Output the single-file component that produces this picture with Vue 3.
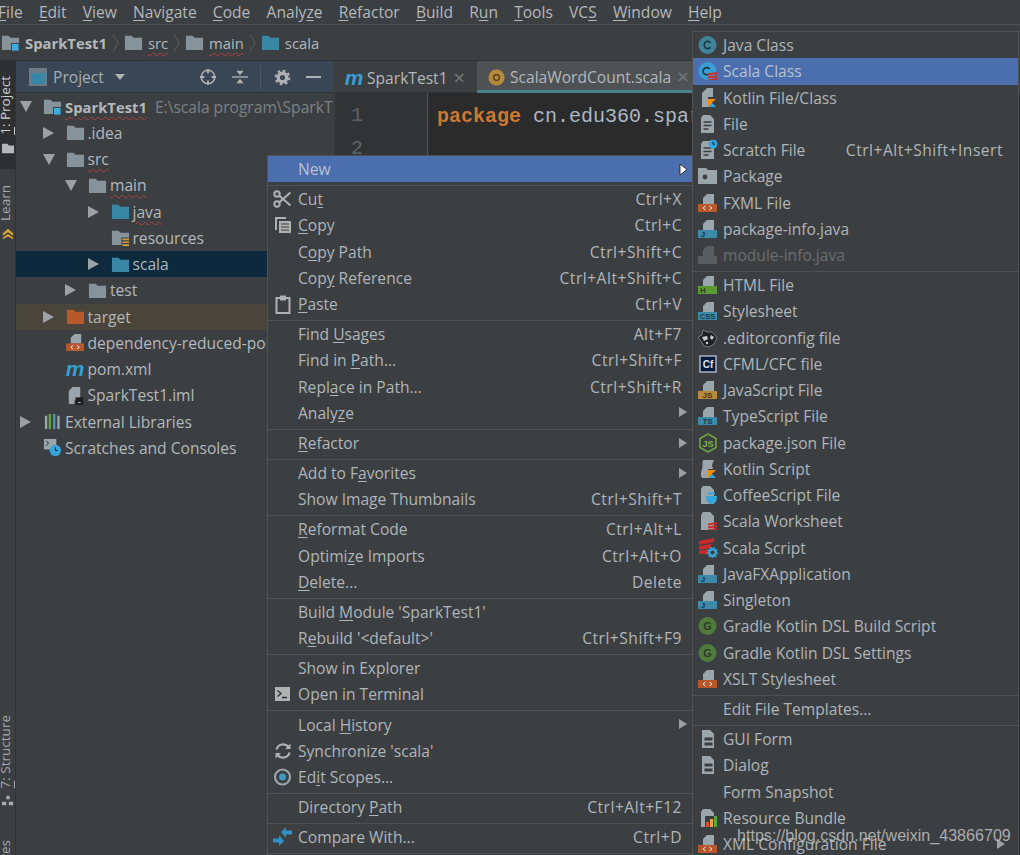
<script setup>
const G = '#9aa5ac'
const D = '#3c3f41'
const doc = `<path d="M9 1h7v10H5V5z" fill="${G}"/>`
const tag = (c, t, tc = '#2f3a3f', fs = 8) =>
  `${doc}<rect x="0" y="11" width="19" height="8" fill="${c}"/><text x="${t.length > 1 ? 9.5 : 5}" y="18" font-size="${fs}" text-anchor="middle" font-family="Liberation Sans,sans-serif" font-weight="700" fill="${tc}">${t}</text>`
const xml = `${doc}<rect x="0" y="11" width="19" height="8" fill="#b8582a"/><path d="M7.5 13l-2.5 2 2.5 2M11.5 13l2.5 2-2.5 2" fill="none" stroke="#eee" stroke-width="1"/>`
const page = `<path d="M5 1h7l4 4v14H3V4z" fill="${G}"/>`
const lines = `<path d="M5.5 8h8M5.5 11.5h8M5.5 15h5" stroke="${D}" stroke-width="1.4"/>`
const stripes = `<path d="M10 12.5l9-1.5v2l-9 1.5zM10 15.5l9-1.5v2l-9 1.5zM10 18.5l9-1.5v2h-9z" fill="#d02b2b"/>`
const kot = `<path d="M10 11h8l-4.5 4.2L18 19h-8z" fill="#f88909"/><path d="M10 19l4-4 4 4z" fill="#27a6e5"/>`
const clock = (x, y, r) => `<circle cx="${x}" cy="${y}" r="${r}" fill="#35a5dc"/><path d="M${x} ${y - r * 0.55}v${r * 0.6}h${r * 0.45}" stroke="#123" fill="none" stroke-width="1"/>`
const folder = (c) => `<path d="M1 3h7l2 2h9v13H1z" fill="${c}"/>`
const gradle = `<circle cx="9.5" cy="10" r="9" fill="#4f7c3c"/><text x="9.5" y="14" font-size="11" font-weight="700" text-anchor="middle" font-family="Liberation Sans,sans-serif" fill="#2d3a2a">G</text>`

const icons = {
  java: `<circle cx="9.5" cy="10" r="9" fill="#40849b"/><path d="M12.5 7.7a3.6 3.6 0 1 0 0 4.6" fill="none" stroke="#1f3640" stroke-width="1.6"/>`,
  scala: `<circle cx="9.5" cy="10" r="9" fill="#389fd6"/><path d="M11.5 8a3.6 3.6 0 1 0 0 4.4" fill="none" stroke="#1f3640" stroke-width="1.6"/>${stripes}`,
  kotlin: `<path d="M9 0h6v9h-5v10H4V5z" fill="${G}"/>${kot}`,
  file: page + lines,
  scratch: page + lines + clock(15, 4, 4.5),
  pack: `<path d="M0 2h8l2 2h9v14H0z" fill="#9aa5ac"/><circle cx="7" cy="11" r="2.4" fill="${D}"/>`,
  xml,
  pj: tag('#3d8aa8', 'J', '#1f3640', 8),
  mod: `<g opacity=".3">${doc}<rect y="11" width="19" height="8" fill="${G}"/></g>`,
  html: tag('#5a9a35', 'H', '#26401a', 8),
  css: tag('#3d8aa8', 'CSS', '#1b3a47', 7.5),
  ec: `<path d="M0 9l4-2 1-5 4 2 5 0 3 3 2 3-3 6-5 3-5-1-3-5z" fill="#1f2021" stroke="#8a8d8f" stroke-width=".8"/><path d="M4 9l5-1 1 3-4 2zM13 7l3 2-2 3-2-2z" fill="#c9cbcd"/><circle cx="9" cy="15" r="1.2" fill="#c9cbcd"/>`,
  cf: `<rect x="2" y="2" width="16" height="16" fill="#0a1a3c" stroke="#b4bccc" stroke-width="1.4"/><text x="10" y="14" font-size="10" font-weight="700" text-anchor="middle" font-family="Liberation Sans,sans-serif" fill="#dfe6f2">Cf</text>`,
  js: tag('#b98a3a', 'JS', '#4a3513', 8),
  ts: tag('#3d8aa8', 'TS', '#1b3a47', 8),
  npm: `<path d="M10 1l8 4.5v9L10 19l-8-4.5v-9z" fill="none" stroke="#6da43f" stroke-width="1.6"/><text x="10" y="13.5" font-size="9" font-weight="700" text-anchor="middle" font-family="Liberation Sans,sans-serif" fill="#7fb548">JS</text>`,
  ks: `<path d="M5 1h11l-2 5 1 4h-5v9H4c-2-3-1-6 0-9 1-3 0-6 1-9z" fill="${G}"/>${kot}`,
  coffee: `${page}<path d="M8 11h11c0 4-1 8-5.5 8S8 15 8 11z" fill="#35a5dc"/><path d="M10 8.500h7" stroke="#35a5dc" stroke-width="2"/>`,
  ws: page + stripes,
  ss: `<path d="M1 3l15-3v4L1 7zM1 8l12-2v4L1 12zM1 13l9-1.500V16H1z" fill="#c92a2a"/><circle cx="14.500" cy="14.500" r="3.300" fill="none" stroke="#35a5dc" stroke-width="2.400"/><circle cx="14.500" cy="14.500" r="5" fill="none" stroke="#35a5dc" stroke-width="1.200" stroke-dasharray="1.700 1.700"/>`,
  gradle,
  gui: `<path d="M5 1h8l4 4v14H5z" transform="translate(-1 0)" fill="${G}"/><path d="M6.500 8.500h8v3h-8zM6.500 13.500h8v3h-8z" fill="${D}"/>`,
  bundle: `${page}<rect x="7" y="8" width="13" height="12" fill="${D}"/><rect x="8" y="14" width="3" height="5" fill="#d9512c"/><rect x="12" y="11" width="3" height="8" fill="#e8a33d"/><rect x="16" y="8" width="3" height="11" fill="#59a83c"/>`,
  cut: `<g fill="none" stroke="#afb1b3" stroke-width="2"><circle cx="4" cy="5" r="2.700"/><circle cx="4" cy="15" r="2.700"/><path d="M6 6.500L17.500 16.500M6 13.500L17.500 3.500"/></g>`,
  copy: `<path d="M2 2h11v2H4v11H2z" fill="#afb1b3"/><path d="M6 6h12v12H6z" fill="#afb1b3"/><path d="M8 9h8M8 12h8M8 15h8" stroke="${D}" stroke-width="1.200"/>`,
  paste: `<path d="M3.500 4h13v15h-13z" fill="none" stroke="#afb1b3" stroke-width="2"/><rect x="7" y="1.500" width="6" height="5" fill="#afb1b3"/>`,
  term: `<rect x="2" y="3" width="15" height="14" fill="#afb1b3"/><path d="M4.500 6.500L8 9.500l-3.500 3M9 13.500h5" fill="none" stroke="#2b2d2e" stroke-width="1.300"/>`,
  sync: `<g fill="none" stroke="#afb1b3" stroke-width="2.200"><path d="M3.500 8.500a6.800 6.800 0 0 1 12-2.500"/><path d="M16.500 11.500a6.800 6.800 0 0 1-12 2.500"/></g><path d="M17.500 2.500v5.500h-5.500zM2.500 17.500V12h5.500z" fill="#afb1b3"/>`,
  scopes: `<circle cx="9.500" cy="10" r="7.500" fill="none" stroke="#9aa5ac" stroke-width="2.200"/><circle cx="9.500" cy="10" r="3.500" fill="#3f9ac0"/>`,
  compare: `<path d="M0 12h6V8.500l5 6-5 5V16H0zM19 8h-6v3.500l-5-6 5-5V4h6z" fill="#2f8fc9" transform="translate(0 -.5)"/>`,
  folder: folder('#87939a'),
  blue: folder('#3a87a5'),
  orange: folder('#b8592a'),
  module: `${folder('#87939a')}<rect x="11" y="11" width="8" height="8" fill="#3dade0" stroke="${D}" stroke-width="1"/>`,
  res: `${folder('#87939a')}<rect x="11" y="10" width="9" height="10" fill="${D}"/><path d="M12 12h7M12 15h7M12 18h7" stroke="#d1a23f" stroke-width="1.700"/>`,
  maven: `<text x="9.500" y="16.500" font-size="22" font-style="italic" font-weight="700" text-anchor="middle" font-family="Liberation Sans,sans-serif" fill="#389fd6">m</text>`,
  iml: `<path d="M7 1h8v14H3V5z" fill="${G}"/><path d="M3 6h6v13H3z" fill="${G}"/><rect x="10" y="12" width="8" height="8" fill="#1c1c1c"/><path d="M12.500 17.500h3" stroke="#ccc"/>`,
  libs: `<path d="M2 4h2.500v14H2zM15 4h2.500v14H15z" fill="${G}"/><path d="M6 2h2.500v16H6z" fill="#5fa53c"/><path d="M10.500 2H13v16h-2.500z" fill="#3f9ac0"/>`,
  scr: `<rect x="1" y="1" width="13" height="11" fill="${G}"/><path d="M3 3l3 2.500L3 8" stroke="#333" fill="none"/>${clock(13, 13, 6)}`
}

const withU = (s) => {
  const i = s.indexOf('_')
  return i < 0 ? [s, '', ''] : [s.slice(0, i), s[i + 1], s.slice(i + 2)]
}
const mk = (raw) =>
  raw.map((r) => (r === 0 ? { sep: true } : { p: withU(r[0]), icon: r[1] || '', sc: r[2] || '', more: r[3] || false, sel: r[4] || false, dim: r[5] || false }))

const menu = ['_File', '_Edit', '_View', '_Navigate', '_Code', 'Analy_ze', '_Refactor', '_Build', 'R_un', '_Tools', 'VC_S', '_Window', '_Help'].map(withU)

const popups = [
  {
    cls: 'ctx',
    items: mk([
      ['New', '', '', 'cursor', true], 0,
      ['Cu_t', 'cut', 'Ctrl+X'], ['_Copy', 'copy', 'Ctrl+C'], ['C_opy Path', '', 'Ctrl+Shift+C'], ['Cop_y Reference', '', 'Ctrl+Alt+Shift+C'], ['_Paste', 'paste', 'Ctrl+V'], 0,
      ['Find _Usages', '', 'Alt+F7'], ['Find in _Path...', '', 'Ctrl+Shift+F'], ['Repl_ace in Path...', '', 'Ctrl+Shift+R'], ['Analy_ze', '', '', true], 0,
      ['_Refactor', '', '', true], 0,
      ['Add to F_avorites', '', '', true], ['Show Image Thumbnails', '', 'Ctrl+Shift+T'], 0,
      ['_Reformat Code', '', 'Ctrl+Alt+L'], ['Optimi_ze Imports', '', 'Ctrl+Alt+O'], ['_Delete...', '', 'Delete'], 0,
      ['Build _Module \'SparkTest1\''], ['R_ebuild \'<default>\'', '', 'Ctrl+Shift+F9'], 0,
      ['Show in Explorer'], ['Open in Terminal', 'term'], 0,
      ['Local _History', '', '', true], ['Synchronize \'scala\'', 'sync'], ['Ed_it Scopes...', 'scopes'], 0,
      ['Directory _Path', '', 'Ctrl+Alt+F12'], 0,
      ['Compare With...', 'compare', 'Ctrl+D'], 0
    ])
  },
  {
    cls: 'sub',
    items: mk([
      ['Java Class', 'java'], ['Scala Class', 'scala', '', false, true], ['Kotlin File/Class', 'kotlin'], ['File', 'file'], ['Scratch File', 'scratch', 'Ctrl+Alt+Shift+Insert'], ['Package', 'pack'], ['FXML File', 'xml'], ['package-info.java', 'pj'], ['module-info.java', 'mod', '', false, false, true], 0,
      ['HTML File', 'html'], ['Stylesheet', 'css'], ['.editorconfig file', 'ec'], ['CFML/CFC file', 'cf'], ['JavaScript File', 'js'], ['TypeScript File', 'ts'], ['package.json File', 'npm'], ['Kotlin Script', 'ks'], ['CoffeeScript File', 'coffee'], ['Scala Worksheet', 'ws'], ['Scala Script', 'ss'], ['JavaFXApplication', 'pj'], ['Singleton', 'pj'], ['Gradle Kotlin DSL Build Script', 'gradle'], ['Gradle Kotlin DSL Settings', 'gradle'], ['XSLT Stylesheet', 'xml'], 0,
      ['Edit File Templates...'], 0,
      ['GUI Form', 'gui'], ['Dialog', 'gui'], ['Form Snapshot'], ['Resource Bundle', 'bundle'], ['XML Configuration File', 'xml', '', true]
    ])
  }
]

const tree = [
  { lv: 0, arrow: 'down', icon: 'module', name: 'SparkTest1', bold: true, wavy: true, hint: 'E:\\scala program\\SparkTest1' },
  { lv: 1, arrow: 'right', icon: 'folder', name: '.idea' },
  { lv: 1, arrow: 'down', icon: 'folder', name: 'src', wavy: true },
  { lv: 2, arrow: 'down', icon: 'folder', name: 'main', wavy: true },
  { lv: 3, arrow: 'right', icon: 'blue', name: 'java', wavy: true },
  { lv: 3, icon: 'res', name: 'resources' },
  { lv: 3, arrow: 'right', icon: 'blue', name: 'scala', cls: 'selected' },
  { lv: 2, arrow: 'right', icon: 'folder', name: 'test' },
  { lv: 1, arrow: 'right', icon: 'orange', name: 'target', cls: 'excluded' },
  { lv: 1, icon: 'xml', name: 'dependency-reduced-pom.xml' },
  { lv: 1, icon: 'maven', name: 'pom.xml' },
  { lv: 1, icon: 'iml', name: 'SparkTest1.iml' },
  { lv: 0, arrow: 'right', icon: 'libs', name: 'External Libraries' },
  { lv: 0, icon: 'scr', name: 'Scratches and Consoles' }
]
const crumbs = [
  { icon: 'module', name: 'SparkTest1', cls: 'strong' },
  { icon: 'folder', name: 'src', cls: 'wavy' },
  { icon: 'folder', name: 'main', cls: 'wavy' },
  { icon: 'blue', name: 'scala', cls: '' }
]
</script>

<template>
  <div class="app">
    <div class="menubar">
      <span v-for="m in menu" :key="m[1] + m[2]">{{ m[0] }}<u>{{ m[1] }}</u>{{ m[2] }}</span>
    </div>
    <div class="crumbs">
      <template v-for="(c, i) in crumbs" :key="c.name">
        <svg class="cr-ic" viewBox="0 0 20 20" v-html="icons[c.icon]"></svg>
        <span class="cr-name" :class="c.cls">{{ c.name }}</span>
        <svg v-if="i < 3" class="chev" viewBox="0 0 8 22"><path d="M1 1l6 10-6 10" fill="none" stroke="#5e6163" /></svg>
      </template>
    </div>
    <div class="work">
      <aside class="strip">
        <div class="stab active">
          <span class="vtxt"><u>1</u>: Project</span>
          <svg class="si" viewBox="0 0 14 12"><path d="M0 1h6l2 2h6v9H0z" fill="#b5b8ba" /></svg>
        </div>
        <div class="stab learn">
          <span class="vtxt">Learn</span>
          <svg class="si" viewBox="0 0 14 14"><path d="M7 1l6 5v3L7 5 1 9V6z" fill="#d9a03a" /><path d="M7 7l6 4v2L7 10l-6 3v-2z" fill="#d9a03a" /></svg>
        </div>
        <div class="grow"></div>
        <div class="stab structure">
          <span class="vtxt"><u>7</u>: Structure</span>
          <svg class="si" viewBox="0 0 14 12"><path d="M5 0h4v4H5zM0 7h5v4H0zM8 7h5v4H8z" fill="#a9abad" /></svg>
        </div>
        <div class="stab fav"><span class="vtxt">2: Favorites</span></div>
      </aside>
      <section class="project">
        <div class="ptools">
          <svg class="pw" viewBox="0 0 18 18"><rect x="1" y="1" width="16" height="16" fill="#3a87a5" stroke="#6e7b87" stroke-width="2" /><rect x="2" y="2" width="14" height="3" fill="#6e7b87" /></svg>
          <span class="ptitle">Project</span>
          <span class="caret"></span>
          <div class="grow"></div>
          <svg class="tb" viewBox="0 0 20 20"><circle cx="10" cy="10" r="7.500" fill="none" stroke="#afb1b3" stroke-width="1.700" /><path d="M10 1v5M10 14v5M1 10h5M14 10h5" stroke="#afb1b3" stroke-width="2" /></svg>
          <svg class="tb t2" viewBox="0 0 20 20"><path d="M1 10h18" stroke="#afb1b3" stroke-width="1.500" /><path d="M6 3h8l-4 5zM6 17h8l-4-5z" fill="#afb1b3" /></svg>
          <i class="vsep"></i>
          <svg class="tb t3" viewBox="0 0 20 20"><circle cx="10" cy="10" r="5" fill="none" stroke="#afb1b3" stroke-width="4" /><circle cx="10" cy="10" r="8" fill="none" stroke="#afb1b3" stroke-width="2.500" stroke-dasharray="3.200 3.100" /></svg>
          <i class="minus"></i>
        </div>
        <div class="tree">
          <div v-for="t in tree" :key="t.name" class="trow" :class="t.cls" :style="{ paddingLeft: 4 + t.lv * 22.5 + 'px' }">
            <span class="arr" :class="t.arrow"></span>
            <svg class="tic" viewBox="0 0 20 20" v-html="icons[t.icon]"></svg>
            <span class="tname" :class="{ strong: t.bold, wavy: t.wavy }">{{ t.name }}</span>
            <span v-if="t.hint" class="hint">{{ t.hint }}</span>
          </div>
        </div>
      </section>
      <section class="editor">
        <div class="tabs">
          <div class="tab one">
            <svg class="tic" viewBox="0 0 20 20" v-html="icons.maven"></svg>
            <span>SparkTest1</span><span class="x">×</span>
          </div>
          <div class="tab two">
            <svg class="tic" viewBox="0 0 20 20"><circle cx="10" cy="10" r="8.500" fill="#b58a3f" /><circle cx="10" cy="10" r="3" fill="none" stroke="#4a3a1c" stroke-width="1.300" /></svg>
            <span>ScalaWordCount.scala</span><span class="x">×</span>
          </div>
        </div>
        <div class="codearea">
          <div class="gutter"><div>1</div><div>2</div></div>
          <pre class="code"><b>package</b> cn.edu360.spark</pre>
        </div>
      </section>
    </div>

    <div v-for="pop in popups" :key="pop.cls" class="popup" :class="pop.cls">
      <template v-for="(it, n) in pop.items" :key="n">
        <div v-if="it.sep" class="sep"></div>
        <div v-else class="row" :class="{ sel: it.sel, dim: it.dim }">
          <svg class="mic" viewBox="0 0 20 20" v-html="icons[it.icon] || ''"></svg>
          <span class="lbl">{{ it.p[0] }}<u>{{ it.p[1] }}</u>{{ it.p[2] }}</span>
          <span v-if="it.sc" class="sc">{{ it.sc }}</span>
          <svg v-if="it.more === 'cursor'" class="cur" viewBox="0 0 9 11"><path d="M1 0l7 5.500L1 11z" fill="#fff" stroke="#111" stroke-width=".8" /></svg>
          <span v-else-if="it.more" class="more"></span>
        </div>
      </template>
    </div>
    <div class="mark">https://blog.csdn.net/weixin_43866709</div>
  </div>
</template>

<style scoped>
.app {
  position: relative;
  width: 1020px;
  height: 855px;
  overflow: hidden;
  background: #3c3f41;
  color: #b3b8bc;
  font-family: "Open Sans", "Noto Sans", sans-serif;
  font-size: 15.6px;
  line-height: 20px;
  display: flex;
  flex-direction: column;
}
.grow { flex: 1; }
u { text-underline-offset: 2px; }
.menubar {
  height: 25px;
  flex: none;
  display: flex;
  align-items: center;
  gap: 16.2px;
  margin-left: -2px;
  border-bottom: 1px solid #515151;
  box-sizing: border-box;
  white-space: nowrap;
}
.crumbs {
  height: 36px;
  flex: none;
  display: flex;
  align-items: center;
  padding-left: 1px;
  border-bottom: 1px solid #323232;
  box-sizing: border-box;
  font-size: 14.8px;
}
.cr-ic { width: 19px; height: 19px; flex: none; }
.cr-name { margin-left: 5px; color: #b3b8bc; }
.chev { width: 7px; height: 22px; margin: 0 5px; flex: none; }
.strong { font-weight: 700; font-size: 14.8px; }
.wavy { text-decoration: underline wavy #b13f3f 1px; text-underline-offset: 3px; }
.work { flex: 1; display: flex; min-height: 0; }
.strip {
  width: 15px;
  flex: none;
  display: flex;
  flex-direction: column;
  border-right: 1px solid #323232;
  overflow: hidden;
  font-size: 13.5px;
}
.stab { display: flex; flex-direction: column; align-items: center; flex: none; }
.stab.active { background: #2d2f30; height: 108px; justify-content: flex-start; padding-top: 15px; box-sizing: border-box; gap: 5px; color: #cfd1d3; }
.stab.learn { margin-top: 16px; gap: 5px; }
.stab.structure .si { margin-top: 7px; }
.stab.fav { margin-top: 33px; height: 15px; }
.vtxt {
  writing-mode: vertical-rl;
  transform: translateX(-2px) rotate(180deg);
  white-space: nowrap;
  width: 15px;
  line-height: 15px;
  color: #a6a9ac;
  flex: none;
}
.active .vtxt { color: #cfd1d3; }
.si { width: 12px; height: 12px; margin-top: 2px; flex: none; }
.project { width: 317px; flex: none; display: flex; flex-direction: column; min-width: 0; overflow: hidden; }
.ptools {
  height: 32px;
  flex: none;
  display: flex;
  align-items: center;
  background: #394655;
  padding: 1px 12px 0 13px;
  box-sizing: border-box;
  border-bottom: 1px solid #323232;
}
.pw { width: 18px; height: 18px; flex: none; }
.ptitle { margin-left: 6px; color: #a7adb3; }
.caret { margin-left: 11px; border: 5px solid transparent; border-top: 6px solid #afb1b3; border-bottom: 0; }
.tb { width: 18px; height: 18px; flex: none; }
.t2 { margin-left: 14px; }
.t3 { margin-left: 13px; width: 17px; height: 17px; }
.vsep { width: 1px; height: 24px; background: #4b5866; margin-left: 11px; }
.minus { width: 15px; height: 2px; background: #afb1b3; margin-left: 15px; }
.tree { flex: 1; padding-top: 0.5px; }
.trow {
  height: 26.25px;
  display: flex;
  align-items: center;
  white-space: nowrap;
  box-sizing: border-box;
}
.trow.selected { background: #0d293e; }
.trow.excluded { background: #49453a; }
.arr { width: 23px; flex: none; height: 12px; box-sizing: border-box; }
.arr.right { width: 0; height: 0; border: 6px solid transparent; border-left: 11px solid #9ea1a3; border-right: 0; margin-right: 12px; }
.arr.down { width: 0; height: 0; border: 6px solid transparent; border-top: 11px solid #9ea1a3; border-bottom: 0; margin-right: 11px; }
.tic { width: 19px; height: 19px; flex: none; }
.tname { margin-left: 3px; color: #b3b8bc; }
.hint { margin-left: 8px; color: #7d8285; }
.editor { flex: 1; min-width: 0; margin-left: 2px; display: flex; flex-direction: column; }
.tabs { height: 32px; flex: none; display: flex; }
.tab { display: flex; align-items: center; white-space: nowrap; padding: 3px 0 0 10px; box-sizing: border-box; }
.tab .tic { margin-right: 3px; }
.tab.one { width: 142px; border-bottom: 1px solid #323232; }
.tab.two { width: 217px; background: #4e5254; border-bottom: 3px solid #4a7f8f; }
.tab.two .tic { margin-right: 4px; }
.tab .x { margin-left: 6px; color: #787b7d; font-size: 20px; }
.codearea { flex: 1; display: flex; background: #2b2b2b; }
.gutter {
  width: 93px;
  flex: none;
  background: #313335;
  border-right: 1px solid #555;
  color: #606366;
  font-family: "Liberation Mono", monospace;
  font-size: 20px;
  line-height: 33px;
  padding: 6px 0 0 16px;
  box-sizing: border-box;
}
.code {
  margin: 0;
  padding: 7px 0 0 9px;
  color: #a9b7c6;
  font-family: "Liberation Mono", monospace;
  font-size: 20px;
  line-height: 33px;
}
.code b { color: #cc7832; }
.popup {
  position: absolute;
  background: #3c3f41;
  border: 1px solid #515151;
  box-sizing: border-box;
  display: flex;
  flex-direction: column;
}
.ctx { left: 267px; top: 155px; width: 426px; --pr: 10px; height: 710px; }
.sub { left: 692px; top: 31px; width: 327px; --pr: 15px; height: 830px; }
.row {
  height: 26.25px;
  flex: none;
  display: flex;
  align-items: center;
  padding: 0 var(--pr) 0 5px;
  white-space: nowrap;
  position: relative;
  color: #afb5ba;
}
.row.sel { background: #4b6eaf; color: #b9c2cf; }
.row.dim { color: #6b6e70; }
.mic { width: 20px; height: 20px; flex: none; margin-right: 5px; }
.sc { margin-left: auto; letter-spacing: 0.5px; }
.sep { height: 3.8px; flex: none; box-sizing: border-box; border-bottom: 1px solid #515151; }
.more, .cur { position: absolute; top: 50%; margin-top: -5.5px; right: 5px; }
.sub .more { right: 13px; }
.more { border: 5.5px solid transparent; border-left: 8px solid #9ea1a3; border-right: 0; }
.cur { width: 9px; height: 11px; right: 4px; }
.mark {
  position: absolute;
  left: 737px;
  top: 825px;
  font-family: "Liberation Sans", Arial, sans-serif;
  font-size: 16.1px;
  color: rgba(208, 210, 212, 0.75);
  white-space: nowrap;
}
</style>
